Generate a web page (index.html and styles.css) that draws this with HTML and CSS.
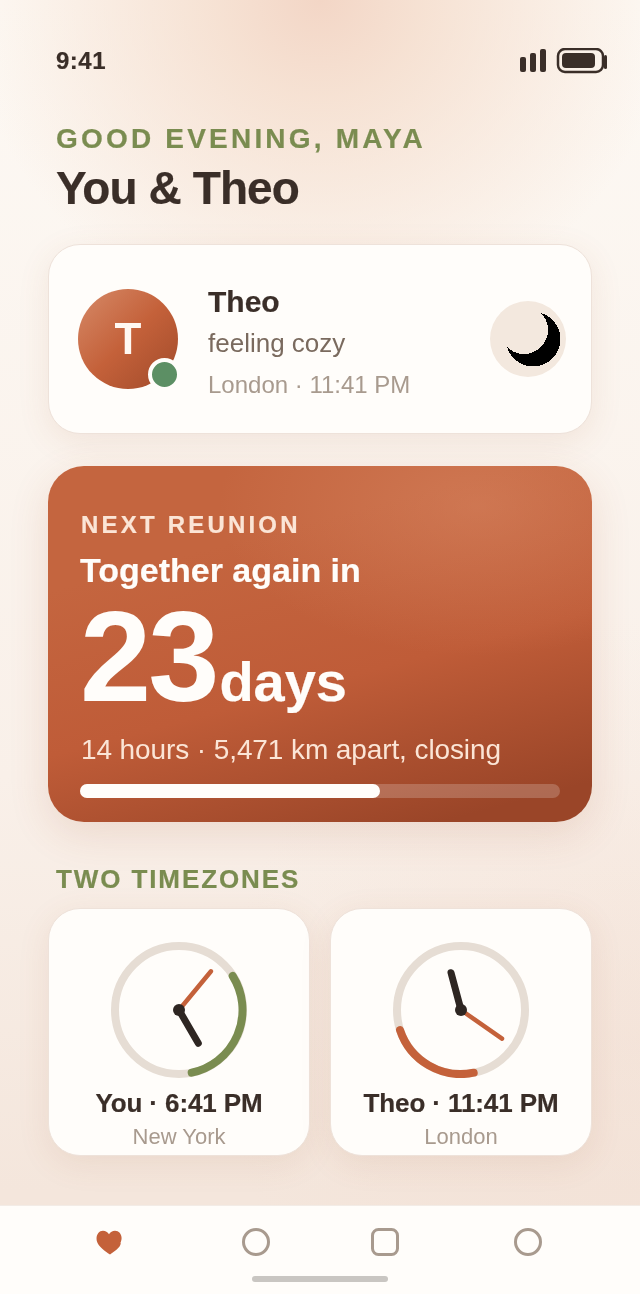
FILE: index.html
```html
<!DOCTYPE html>
<html lang="en">
<head>
<meta charset="utf-8">
<title>You &amp; Theo</title>
<link rel="stylesheet" href="styles.css">
</head>
<body>
<div class="screen">
  <div class="status">
    <span class="time">9:41</span>
    <svg class="status-icons" width="88" height="26" viewBox="0 0 88 26">
      <rect x="0" y="9" width="6" height="15" rx="2"/>
      <rect x="10" y="5" width="6" height="19" rx="2"/>
      <rect x="20" y="1" width="6" height="23" rx="2"/>
      <rect x="38" y="1" width="45" height="23" rx="7" class="batt-outline"/>
      <rect x="42" y="5" width="33" height="15" rx="4"/>
      <rect x="84" y="7" width="3" height="14" rx="1.5"/>
    </svg>
  </div>
  <header class="header">
    <div class="greeting">GOOD EVENING, MAYA</div>
    <h1 class="title">You &amp; Theo</h1>
  </header>
  <section class="card person">
    <div class="avatar">T<span class="online"></span></div>
    <div class="person-info">
      <div class="person-name">Theo</div>
      <div class="person-mood">feeling cozy</div>
      <div class="person-place">London · 11:41 PM</div>
    </div>
    <div class="moon">
      <svg width="76" height="76" viewBox="0 0 76 76" shape-rendering="crispEdges">
        <path d="M51 12 A27.3 27.3 0 1 1 17 46 A24 24 0 0 0 51 12 Z"/>
      </svg>
    </div>
  </section>
  <section class="hero">
    <div class="hero-label">NEXT REUNION</div>
    <div class="hero-title">Together again in</div>
    <div class="hero-count"><span class="hero-num">23</span><span class="hero-unit">days</span></div>
    <div class="hero-sub">14 hours · 5,471 km apart, closing</div>
    <div class="bar"><div class="bar-fill"></div></div>
  </section>
  <div class="section-label">TWO TIMEZONES</div>
  <section class="clocks">
    <div class="card clock-card">
      <svg class="clock" width="136" height="136" viewBox="-68 -68 136 136">
        <circle class="ring" r="64"/>
        <path class="arc arc-green" d="M53.7 -34 A64 64 0 0 1 12.7 62.7"/>
        <line class="hand-min" x1="0" y1="0" x2="32" y2="-38.7"/>
        <line class="hand-hour" x1="0" y1="0" x2="19.3" y2="33.3"/>
        <circle class="pin" r="6"/>
      </svg>
      <div class="clock-time">You · 6:41 PM</div>
      <div class="clock-city">New York</div>
    </div>
    <div class="card clock-card">
      <svg class="clock" width="136" height="136" viewBox="-68 -68 136 136">
        <circle class="ring" r="64"/>
        <path class="arc arc-red" d="M-61 20 A64 64 0 0 0 12.7 62.7"/>
        <line class="hand-min" x1="0" y1="0" x2="41" y2="28.7"/>
        <line class="hand-hour" x1="0" y1="0" x2="-10" y2="-37.3"/>
        <circle class="pin" r="6"/>
      </svg>
      <div class="clock-time">Theo · 11:41 PM</div>
      <div class="clock-city">London</div>
    </div>
  </section>
  <nav class="tabbar">
    <div class="tabs">
      <svg class="tab" width="28" height="28" viewBox="0 0 28 28">
        <path class="heart" d="M15 26.6 C10 23 3.2 18.6 1.8 13 C0.6 7.6 3.6 2.8 8 2.8 C10.6 2.8 12.6 4 14 6.2 C15.4 4 17.4 2.8 20 2.8 C23.8 2.8 26.6 6 26.6 10 C26.6 12 25.9 13.8 25.4 15 L25.8 15.6 C25 20 19.5 23.5 15 26.6 Z"/>
      </svg>
      <svg class="tab" width="28" height="28" viewBox="0 0 28 28"><circle class="tab-line" cx="14" cy="14" r="12.5"/></svg>
      <svg class="tab" width="28" height="28" viewBox="0 0 28 28"><rect class="tab-line" x="1.5" y="1.5" width="25" height="25" rx="6"/></svg>
      <svg class="tab" width="28" height="28" viewBox="0 0 28 28"><circle class="tab-line" cx="14" cy="14" r="12.5"/></svg>
    </div>
    <div class="home"></div>
  </nav>
</div>
</body>
</html>
```
FILE: styles.css
```css
* { box-sizing: border-box; margin: 0; padding: 0; }
html, body { width: 640px; height: 1294px; overflow: hidden; }
body { font-family: "Liberation Sans", Arial, sans-serif; color: #3a2e28; background: #fdf9f4; }
.screen {
  width: 640px; height: 1294px; display: flex; flex-direction: column;
  padding: 0 48px;
  background:
    radial-gradient(ellipse 350px 330px at 320px 0, #f3d6c6 0%, rgba(245, 222, 206, .85) 30%, rgba(248, 232, 220, 0) 100%),
    radial-gradient(ellipse 420px 420px at 640px 1040px, rgba(240, 214, 200, .3) 0%, rgba(240, 214, 200, 0) 100%),
    linear-gradient(180deg, #fdf9f4 0%, #f9f0e9 60%, #f4e6dc 92%);
}
/* soft, slightly heavy text and line work */
.status, .header, .avatar, .person-info, .hero-label, .hero-title, .hero-count, .hero-sub,
.section-label, .clock, .clock-time, .clock-city, .tab, .home { filter: blur(.45px); }
.time, .greeting, .title, .person-name, .hero-label, .hero-title, .hero-unit, .section-label, .clock-time { -webkit-text-stroke: .2px currentColor; }

.status { display: flex; justify-content: space-between; align-items: center; padding: 0 8px; margin-top: 48px; height: 26px; }
.time { font-size: 24px; font-weight: 700; letter-spacing: .5px; }
.status-icons { fill: #3a2e28; margin-right: -24px; flex: none; }
.batt-outline { fill: none; stroke: #3a2e28; stroke-width: 2.5; }
.header { padding: 0 8px; margin-top: 49px; }
.greeting { font-size: 28px; line-height: 32px; font-weight: 700; letter-spacing: 3.2px; color: #7a8c50; }
.title { font-size: 46px; line-height: 52px; font-weight: 700; letter-spacing: -.92px; color: #3a2e28; margin-top: 7px; }
.card { background: #fffdfa; border: 1px solid #eee2da; box-shadow: 0 8px 32px rgba(160, 90, 50, .1); }
.person { height: 190px; margin-top: 30px; border-radius: 32px; display: flex; align-items: center; padding: 0 25px 0 29px; }
.avatar {
  position: relative; width: 100px; height: 100px; border-radius: 50%; flex: none;
  background: linear-gradient(135deg, #d68a68 0%, #c4613a 50%, #a04a2a 100%);
  color: #fff8f2; font-size: 44px; font-weight: 700; line-height: 100px; text-align: center;
}
.online { position: absolute; right: -3px; bottom: -2px; width: 33px; height: 33px; border-radius: 50%; background: #5c8f64; border: 4px solid #fffdfa; }
.person-info { margin-left: 30px; flex: 1; padding-top: 4px; }
.person-name { font-size: 30px; line-height: 36px; font-weight: 700; color: #3a2e28; }
.person-mood { font-size: 26px; line-height: 30px; color: #7a6a5e; margin-top: 8px; }
.person-place { font-size: 24px; line-height: 28px; color: #a89a8e; margin-top: 13px; }
.moon { width: 76px; height: 76px; border-radius: 50%; background: #f3e8de; flex: none; }
.moon svg { display: block; fill: #000; }
.hero {
  height: 356px; margin-top: 32px; border-radius: 36px; padding: 45px 32px 0; color: #fffdfa;
  background:
    radial-gradient(ellipse 260px 150px at 430px 40px, rgba(225, 150, 115, .38) 0%, rgba(225, 150, 115, 0) 100%),
    linear-gradient(165deg, #c4653f 0%, #c4653f 25%, #bf5c38 58%, #9a4528 92%);
  box-shadow: 0 12px 40px rgba(160, 80, 40, .14);
}
.hero-label { font-size: 24px; line-height: 28px; font-weight: 700; letter-spacing: 3.2px; color: #fbe5d6; margin-left: 1px; }
.hero-title { font-size: 34px; line-height: 40px; font-weight: 700; margin-top: 11px; }
.hero-count { display: flex; align-items: baseline; margin-top: 3px; height: 128px; line-height: 128px; }
.hero-num { font-size: 128px; font-weight: 700; letter-spacing: -3px; }
.hero-unit { font-size: 56px; font-weight: 700; margin-left: 3px; }
.hero-sub { font-size: 28px; line-height: 34px; color: #fbe5d6; margin: 12px 0 0 1px; letter-spacing: -.1px; }
.bar { height: 14px; border-radius: 7px; background: rgba(255, 255, 255, .2); margin-top: 17px; }
.bar-fill { width: 62.5%; height: 100%; border-radius: 7px; background: #fffdfa; }
.section-label { font-size: 26px; line-height: 30px; font-weight: 700; letter-spacing: 1.9px; color: #7a8c50; padding: 0 8px; margin-top: 42px; }
.clocks { display: flex; gap: 20px; margin-top: 14px; }
.clock-card { flex: 1; height: 248px; border-radius: 32px; display: flex; flex-direction: column; align-items: center; padding-top: 33px; }
.clock { display: block; flex: none; }
.ring { fill: none; stroke: #e6ddd4; stroke-width: 8; }
.arc { fill: none; stroke-width: 8; stroke-linecap: round; }
.arc-green { stroke: #7a8c50; }
.arc-red { stroke: #c4613a; }
.hand-min { stroke: #c4613a; stroke-width: 4.5; stroke-linecap: round; }
.hand-hour { stroke: #2e2622; stroke-width: 7; stroke-linecap: round; }
.pin { fill: #2e2622; }
.clock-time { font-size: 26px; line-height: 30px; font-weight: 700; color: #3a2e28; margin-top: 10px; white-space: nowrap; letter-spacing: -.1px; }
.clock-city { font-size: 22px; line-height: 26px; color: #a89a8e; margin-top: 6px; }
.tabbar { margin: auto -48px 0; height: 89px; background: #fffdfa; border-top: 1px solid #f3ece6; display: flex; flex-direction: column; align-items: center; padding-top: 22px; }
.tabs { width: 100%; display: grid; grid-template-columns: 147px 129px 143px 1fr; padding-left: 95px; }
.tab { display: block; }
.heart { fill: #c4613a; }
.tab-line { fill: none; stroke: #a89a8e; stroke-width: 3; }
.home { width: 136px; height: 6px; border-radius: 3px; background: #c9c6c2; margin-top: 20px; }
```
